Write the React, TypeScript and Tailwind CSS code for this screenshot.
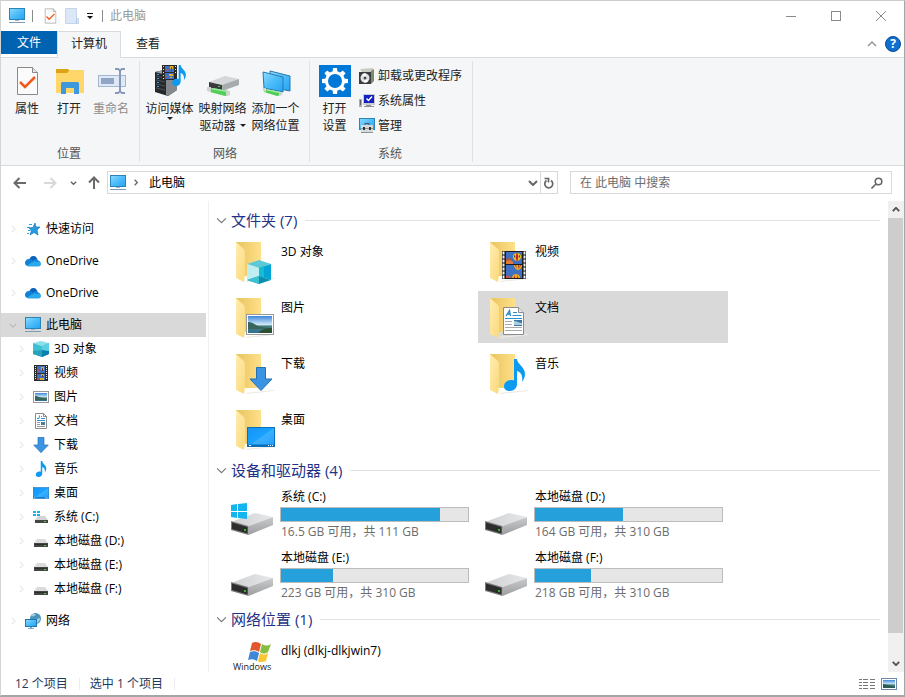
import { useState } from "react"
import type { ComponentType, ReactNode, SVGProps } from "react"
import clsx from "clsx"

type IconProps = SVGProps<SVGSVGElement>
type Icon = ComponentType<IconProps>

/* ---------- shared gradients ---------- */

function Gradients() {
  return (
    <svg className="absolute h-0 w-0" aria-hidden="true">
      <defs>
        <linearGradient id="screen" x1="0" y1="0" x2="1" y2="1">
          <stop offset="0" stopColor="#8fdcff" />
          <stop offset="0.5" stopColor="#4dbcf9" />
          <stop offset="1" stopColor="#22a3f3" />
        </linearGradient>
        <linearGradient id="folderBack" x1="0" y1="0" x2="1" y2="0">
          <stop offset="0" stopColor="#e9c35d" />
          <stop offset="1" stopColor="#ffe08a" />
        </linearGradient>
        <linearGradient id="folderFlap" x1="0" y1="0" x2="1" y2="1">
          <stop offset="0" stopColor="#ffedb0" />
          <stop offset="1" stopColor="#fbd97c" />
        </linearGradient>
        <linearGradient id="driveTop" x1="0" y1="0" x2="1" y2="0">
          <stop offset="0" stopColor="#d0d1d2" />
          <stop offset="1" stopColor="#e6e7e9" />
        </linearGradient>
        <linearGradient id="driveSide" x1="0" y1="0" x2="0" y2="1">
          <stop offset="0" stopColor="#c9cbcd" />
          <stop offset="1" stopColor="#9b9da0" />
        </linearGradient>
        <linearGradient id="sky" x1="0" y1="0" x2="0" y2="1">
          <stop offset="0" stopColor="#3f86dc" />
          <stop offset="0.5" stopColor="#cfe9f8" />
          <stop offset="0.6" stopColor="#4a7f79" />
          <stop offset="1" stopColor="#2e6f96" />
        </linearGradient>
        <linearGradient id="desk" x1="0" y1="0" x2="1" y2="1">
          <stop offset="0" stopColor="#1593f5" />
          <stop offset="0.5" stopColor="#19a2ff" />
          <stop offset="0.52" stopColor="#3bb0ff" />
          <stop offset="1" stopColor="#1e9dff" />
        </linearGradient>
      </defs>
    </svg>
  )
}

/* ---------- item glyphs, used small in the tree and large on folders ---------- */

const PcIcon = (p: IconProps) => (
  <svg viewBox="0 0 16 16" {...p}>
    <rect x="0.5" y="0.5" width="15" height="11" fill="url(#screen)" stroke="#2b84b8" />
    <path d="M6 12h4v1H6z" fill="#9db4c4" />
    <path d="M0 14h16v1H0z" fill="#7d9cb3" />
  </svg>
)

const CubeIcon = (p: IconProps) => (
  <svg viewBox="0 0 24 24" {...p}>
    <path d="M12 0 24 4 12 8 0 4z" fill="#5cc8d8" />
    <path d="M0 4 12 8v8L0 20z" fill="#bfeef2" />
    <path d="M24 4 12 8v8l12 4z" fill="#03a5d6" />
    <path d="M12 8v8l5 2V6z" fill="#17bcd4" />
    <path d="M0 20 12 16 24 20 12 24z" fill="#0b8fae" />
    <path d="M0 20 12 16v8z" fill="#3cc1d1" />
  </svg>
)

const CubeSmallIcon = (p: IconProps) => (
  <svg viewBox="0 0 16 16" {...p}>
    <path d="M0 2 8 0l8 2-7 3z" fill="#8be0ea" />
    <path d="M0 2 9 5v11L0 13z" fill="#3cc0d4" />
    <path d="M0 10l9-1v7l-9-3z" fill="#25a3bb" />
    <path d="M16 2 9 5v11l7-3z" fill="#0f9fd6" />
    <path d="M9 9l7 1v3l-7 3z" fill="#0a7fae" />
    <path d="M9 5 16 2v8L9 9z" fill="#5bd0e2" />
  </svg>
)

const FilmIcon = (p: IconProps) => (
  <svg viewBox="0 0 24 28" {...p}>
    <path d="M0 0h24v28H0z" fill="#4a4a4a" />
    <path d="M3 0h18v28H3z" fill="#1c1c1c" />
    <path d="M4 1h16v12H4zM4 14h16v13H4z" fill="#3f70c4" />
    <path d="M4 8c2-2 4-1 6 1l1 4H4z" fill="#b5503f" />
    <path d="M4 10l4-1 3 2v2H4z" fill="#e07c35" />
    <path d="M4 25c2-1 4-1 5 2H4z" fill="#c2574a" />
    <path d="M15 2c3 0 4 2 4 4s-2 3-3 4h-2c-1-1-3-2-3-4s1-4 4-4z" fill="#f2c522" />
    <path d="M14.500 2h1l1 4-1 4h-1l-1-4z" fill="#c22d2d" />
    <path d="M12 5l1-1v3zM18 5l-1-1v3z" fill="#222" />
    <path d="M12 14h8c0 3-2 4-3 5h-2c-1-1-3-2-3-5z" fill="#e3b023" />
    <path d="M13 14h1l1 4zM16 14h1l-.5 5zM19 14h-1l-1 4z" fill="#a2262c" />
    <path d="M10 27c0-3 2-4 4-4s4 1 4 4z" fill="#f0a51f" />
    <path d="M12 27l1-3v3zM15 24l1 3h-1z" fill="#8b2020" />
    <path
      d="M1 1h1v2H1zM1 5h1v2H1zM1 9h1v2H1zM1 13h1v2H1zM1 17h1v2H1zM1 21h1v2H1zM1 25h1v2H1zM22 1h1v2h-1zM22 5h1v2h-1zM22 9h1v2h-1zM22 13h1v2h-1zM22 17h1v2h-1zM22 21h1v2h-1zM22 25h1v2h-1z"
      fill="#fff"
      stroke="#e8e8e8"
      strokeWidth="0.7"
    />
  </svg>
)

const FilmSmallIcon = (p: IconProps) => (
  <svg viewBox="0 0 16 16" {...p}>
    <path d="M1 0h14v16H1z" fill="#2c2c2c" />
    <path d="M4 1h8v7H4zM4 9h8v6H4z" fill="#3f70c4" />
    <path d="M4 4h3v3H4zM4 13h2v2H4z" fill="#8a5a78" />
    <path d="M8 2h3v3H8zM8 9h3v2H8zM7 13h4v2H7z" fill="#d9b02c" />
    <path d="M9 3h1v3H9zM9 10h1v2H9z" fill="#5e3a1c" />
    <path d="M2 1h1v1H2zM2 3h1v1H2zM2 5h1v1H2zM2 7h1v1H2zM2 9h1v1H2zM2 11h1v1H2zM2 13h1v1H2zM13 1h1v1h-1zM13 3h1v1h-1zM13 5h1v1h-1zM13 7h1v1h-1zM13 9h1v1h-1zM13 11h1v1h-1zM13 13h1v1h-1z" fill="#e4e4e4" />
  </svg>
)

const PictureIcon = (p: IconProps) => (
  <svg viewBox="0 0 28 21" {...p}>
    <rect x="0.5" y="0.5" width="27" height="20" fill="#fff" stroke="#9a9a9a" />
    <rect x="2" y="2" width="24" height="17" fill="url(#sky)" />
    <path d="M2 8c3 0 5 1 8 3s9 3 16 3v1H2z" fill="#39655a" />
    <path d="M12 19c4-4 9-5 14-5v5z" fill="#2c4f35" />
  </svg>
)

const PictureSmallIcon = (p: IconProps) => (
  <svg viewBox="0 0 16 16" {...p}>
    <rect x="0.5" y="2.500" width="15" height="11" fill="#fff" stroke="#999" />
    <rect x="2" y="4" width="12" height="8" fill="url(#sky)" />
    <path d="M2 7c3 0 5 2 12 3v1H2z" fill="#39655a" />
  </svg>
)

const DocIcon = (p: IconProps) => (
  <svg viewBox="0 0 21 28" {...p}>
    <path d="M.5.500h15l5 5v22H.5z" fill="#fff" stroke="#8c8c8c" />
    <path d="M15.500.500v5h5" fill="#e8e8e8" stroke="#8c8c8c" />
    <path d="M3 9 6.500 3.500 7.500 9M4.500 7h3" fill="none" stroke="#2a86c8" strokeWidth="1.300" />
    <path d="M10 5.500h4M9.500 8.500h9M2 11.500h17" stroke="#2a8fd0" />
    <path d="M2 14.500h7M2 17.500h7M2 20.500h17M2 23.500h17" stroke="#a9a9a9" />
    <path d="M11 13h8v6h-8z" fill="#3a76ad" />
    <path d="M11 14c3 0 5 2 8 2v2h-8z" fill="#a9cfd8" />
  </svg>
)

const DocSmallIcon = (p: IconProps) => (
  <svg viewBox="0 0 16 16" {...p}>
    <path d="M2.500.500h8l3 3v12h-11z" fill="#fff" stroke="#8c8c8c" />
    <path d="M10.500.500v3h3" fill="none" stroke="#8c8c8c" />
    <path d="M4 5.500h2l.5-3M8 3.500h1M8 5.500h4M4 7.500h8" fill="none" stroke="#2a8fd0" />
    <path d="M4 9.500h3M4 11.500h3M4 13.500h8" stroke="#999" />
    <path d="M8 9h4v3H8z" fill="#47809f" />
  </svg>
)

const ArrowDownIcon = (p: IconProps) => (
  <svg viewBox="0 0 24 24" {...p}>
    <path d="M7.500.500h9v11.500h6.500L12 23.500 1 12h6.500z" fill="#3b93e3" stroke="#2470b4" />
  </svg>
)

const NoteIcon = (p: IconProps) => (
  <svg viewBox="0 0 21 32" {...p}>
    <path
      d="M10 0h3c0 5 8 8 8 15 0 3-1 5-3 8 1-6-1-10-5-11v13c0 4-3 7-7 7s-6-2-6-4.500C0 24 3 21 7 21c1 0 2 0 3 .5z"
      fill="#0d9bf2"
    />
  </svg>
)

const DesktopIcon = (p: IconProps) => (
  <svg viewBox="0 0 28 20" {...p}>
    <rect x="0.5" y="0.5" width="27" height="19" fill="url(#desk)" stroke="#0d6fb8" />
    <path d="M1 17.500h26v1.500H1z" fill="#0b6cb5" />
    <path d="M2 18h2v1H2zM21 18h1v1h-1zM23 18h1v1h-1zM25 18h1v1h-1z" fill="#fff" />
  </svg>
)

const StarIcon = (p: IconProps) => (
  <svg viewBox="0 0 16 16" {...p}>
    <path d="M10 2 11 6h4l-3 3 1 5-4-2.500L5 14l1.500-4.500L4 7l4-.5z" fill="#279be2" stroke="#1679be" strokeWidth="0.7" />
    <path d="M4 3.500h3M2 6.500h3M3 9.500h2.500M2 12.500h2" stroke="#2f9fe0" />
  </svg>
)

const CloudIcon = (p: IconProps) => (
  <svg viewBox="0 0 16 16" {...p}>
    <path d="M4 8c0-3 2-5 4.500-5C11 3 12 5 12.500 7L8 11z" fill="#0a63b8" />
    <path d="M0 10c0-2 1.500-4 4-4 2 0 3 .5 4 2l-3 5H3c-2 0-3-1.500-3-3z" fill="#1180d8" />
    <path d="M8 8c1-1.500 2.500-2 4-1.500l3.500 2.500-4 2z" fill="#1583dc" />
    <path d="M2 12.500 9 8c2 1 4 1 5.500.5 1 .5 1.500 1.500 1.500 2.500 0 1.500-1 2.500-2.500 2.500H4c-1 0-1.500-.5-2-1z" fill="#2aa8ea" />
  </svg>
)

const DriveSmallIcon = (p: IconProps) => (
  <svg viewBox="0 0 16 16" {...p}>
    <path d="M4 6h8l3 4H1z" fill="#dadbdc" />
    <path d="M1 10h14v4H1z" fill="#454545" />
    <path d="M2 11h12v1H2z" fill="#2d2d2d" />
    <path d="M11 12h2v1h-2z" fill="#3fe03f" />
  </svg>
)

const SystemDriveSmallIcon = (p: IconProps) => (
  <svg viewBox="0 0 16 16" {...p}>
    <path d="M5 7h7l3 4H2z" fill="#d3d4d5" />
    <path d="M2 11h13v3H2z" fill="#454545" />
    <path d="M11 12h2v1h-2z" fill="#3fe03f" />
    <path d="M0 2h3v2H0zM4 2h3v2H4zM0 5h3v2H0zM4 5h3v2H4z" fill="#12b5ee" />
  </svg>
)

const NetworkIcon = (p: IconProps) => (
  <svg viewBox="0 0 16 16" {...p}>
    <circle cx="10.500" cy="5.500" r="5.500" fill="#4b93bd" />
    <path d="M6 3c1-2 3-2.500 4-2s0 2-1 2-2 1-3 0zM12 6l3-1c0 2-1 4-3 5z" fill="#a3cfe2" />
    <rect x="0.5" y="6.500" width="11" height="7" fill="url(#screen)" stroke="#1d76ad" />
    <path d="M5 14h2v1H5zM3 15h6v1H3z" fill="#7cabc8" />
  </svg>
)

/* ---------- 48px tile icons ---------- */

function FolderIcon({ children }: { children: ReactNode }) {
  return (
    <svg viewBox="0 0 48 48" className="size-12 shrink-0" aria-hidden="true">
      <path d="M15 44 44 41v1l-27 3z" fill="#eeebe5" />
      <path d="M6 5h25v34H12z" fill="url(#folderBack)" />
      <path d="M6 5l8 7c1 1 1 2 1 3v23l-1 7-8-4z" fill="url(#folderFlap)" />
      {children}
    </svg>
  )
}

function DriveIcon({ system = false }: { system?: boolean }) {
  return (
    <svg viewBox="0 0 48 48" className="size-12 shrink-0" aria-hidden="true">
      <path d="M1 31 25 22l18 4-24.500 9z" fill="url(#driveTop)" />
      <path d="M18.500 35 43 26v8L18.500 44z" fill="url(#driveSide)" />
      <path d="M1 30l17.500 5v9L1 39z" fill="#7b7c7e" />
      <path d="M2 31.500 17.500 36v6.500L2 38z" fill="#2d2d2d" />
      <path d="M14 38l2 .5v1.500l-2-.5z" fill="#35e035" />
      {system && <path d="M1 14l6-1v7H1zM8 13l9-1v8H8zM1 21h6v6l-6-1zM8 21h9v7l-9-1z" fill="#12b5ee" />}
    </svg>
  )
}

function MediaPlayerIcon() {
  return (
    <svg viewBox="0 0 48 48" className="size-12 shrink-0" aria-hidden="true">
      <path d="M22 7c4-2 6-1 9 1l-2 8c-3-2-6-2-9-1z" fill="#e1582a" />
      <path d="M32 8c3 2 6 2 9 0l-3 8c-3 2-5 2-8 0z" fill="#86bf3f" />
      <path d="M20 16c3-1 6-1 9 1l-2 8c-3-2-6-2-9-1z" fill="#3f86d6" />
      <path d="M30 17c3 2 5 2 8 0l-2 8c-3 1-6 2-8 0z" fill="#f8c733" />
      <text x="3" y="34" fontSize="9" fill="#222">Windows</text>
      <text x="3" y="42" fontSize="8" fill="#222">Media Player</text>
    </svg>
  )
}

/* ---------- ribbon icons ---------- */

const PropertiesIcon = (p: IconProps) => (
  <svg viewBox="0 0 32 32" {...p}>
    <path d="M6.500 2.500h15l5 5v22h-20z" fill="#fbfbfb" stroke="#8a8a8a" />
    <path d="M21.500 2.500v5h5" fill="#e3e3e3" stroke="#8a8a8a" />
    <path d="M9 17l5 5 10-10" fill="none" stroke="#f4591b" strokeWidth="2.500" />
  </svg>
)

const OpenIcon = (p: IconProps) => (
  <svg viewBox="0 0 32 32" {...p}>
    <path d="M3 5c0-1 0-1 1-1h11l2 2v6H3z" fill="#dda315" />
    <path d="M3 8h11l3-3h13c1 0 1 0 1 1v21c0 1 0 1-1 1H4c-1 0-1 0-1-1z" fill="#ffd669" />
    <path d="M8 18l1-1h16l1 1v11h-5v-6h-8v6H8z" fill="#3f97de" />
  </svg>
)

const RenameIcon = (p: IconProps) => (
  <svg viewBox="0 0 32 32" {...p}>
    <rect x="3.500" y="10.500" width="27" height="11" fill="#dfe8f5" stroke="#a4b6d3" />
    <path d="M6 13h13v6H6z" fill="#93a5c6" />
    <path d="M20 4h3l2 1.500L27 4h3M25 5v22M20 28h3l2-1.500 2 1.500h3" fill="none" stroke="#8799ba" strokeWidth="2" />
  </svg>
)

const MediaIcon = (p: IconProps) => (
  <svg viewBox="0 0 32 32" {...p}>
    <path d="M1 7l9-2 13 3v17l-9 6L1 27z" fill="#26282b" />
    <path d="M12 10h11v15l-9 6-2-1z" fill="#85898e" />
    <path d="M1 7l9-2 4 1-2 4z" fill="#9a9ea3" />
    <path d="M2 11l9 2M2 15l9 2M2 19l9 2M2 23l9 2" stroke="#4c5157" />
    <path d="M3 9h2v1H3zM3 13h2v1H3zM3 17h2v1H3zM3 21h2v1H3z" fill="#39a9f0" />
    <path d="M8 0h15v15H8z" fill="#2a2a2a" />
    <path d="M11 1h9v6h-9zM11 8h9v6h-9z" fill="#3f70c4" />
    <path d="M12 4h3v2h-3zM12 11h2v2h-2z" fill="#7d5d86" />
    <path d="M16 1h3v3h-3zM15 9h4v2h-4zM16 12h2v1h-2z" fill="#dfb42c" />
    <path d="M17 2h1v4h-1z" fill="#9a3a20" />
    <path d="M9 1h1v1H9zM9 4h1v1H9zM9 7h1v1H9zM9 10h1v1H9zM9 13h1v1H9zM21 1h1v1h-1zM21 4h1v1h-1zM21 7h1v1h-1z" fill="#e4e4e4" />
    <NoteIcon x="18" y="0" width="14" height="21" />
  </svg>
)

const MapDriveIcon = (p: IconProps) => (
  <svg viewBox="0 0 32 32" {...p}>
    <path d="M2 17 18 11l14 3-16 6z" fill="#d5d7d9" />
    <path d="M15 20 32 14v6l-17 6z" fill="#a8abae" />
    <path d="M2 17l13 3v6L2 23z" fill="#393b3d" />
    <path d="M11 21h2v1h-2z" fill="#35e035" />
    <path d="M3 24l3-1 16 3v4l-4 1L3 27z" fill="#52cf57" />
    <path d="M3 24l3-1 16 3-3 1z" fill="#9be99d" />
    <path d="M0 22h4v5l-4-1zM19 26h4v4l-4 1z" fill="#cfd3d4" />
  </svg>
)

const AddPlaceIcon = (p: IconProps) => (
  <svg viewBox="0 0 32 32" {...p}>
    <path d="M10 6l20 5v15l-20-4z" fill="url(#screen)" stroke="#2478ad" />
    <path d="M3 7l20 5v15L4 23z" fill="url(#screen)" stroke="#2478ad" />
    <path d="M5 24l16 3v3l-4 1-13-4z" fill="#4dcb52" />
    <path d="M5 24l16 3-3 1-13-3z" fill="#a2eca4" />
    <path d="M3 23h3v4l-3-1zM19 27h3v3l-3 1z" fill="#cfd3d4" />
  </svg>
)

const gearTeeth = [0, 45, 90, 135, 180, 225, 270, 315]

const SettingsIcon = (p: IconProps) => (
  <svg viewBox="0 0 32 32" {...p}>
    <path d="M0 0h32v32H0z" fill="#0078d7" />
    <circle cx="16" cy="16" r="8.500" fill="none" stroke="#fff" strokeWidth="3" />
    {gearTeeth.map((angle) => (
      <path key={angle} d="M13.500 8l.5-5h4l.5 5z" fill="#fff" transform={`rotate(${angle} 16 16)`} />
    ))}
  </svg>
)

const UninstallIcon = (p: IconProps) => (
  <svg viewBox="0 0 16 16" {...p}>
    <path d="M1 1l13-1v14l-3 2z" fill="#c9ccc4" />
    <path d="M12 3l3-2v12l-3 3z" fill="#7d8b6b" />
    <path d="M0 4h12v12H0z" fill="#3a3c3e" />
    <circle cx="6" cy="10" r="4.500" fill="#dfe3e5" />
    <path d="M6 10 3 6.500A4.500 4.500 0 0 1 7 5.500zM6 10l3 3.500a4.500 4.500 0 0 1-4 1z" fill="#fff" />
    <circle cx="6" cy="10" r="1.500" fill="#45484a" />
  </svg>
)

const SystemPropsIcon = (p: IconProps) => (
  <svg viewBox="0 0 16 16" {...p}>
    <path d="M0 6h3v8H0z" fill="#a9adb0" />
    <path d="M1 7h1v5H1z" fill="#5f6366" />
    <path d="M4 1h12v11H4z" fill="#c9ccd0" />
    <path d="M5 2h10v8H5z" fill="#1420c0" />
    <path d="M7.500 5.500l2 2 3.500-4" fill="none" stroke="#fff" strokeWidth="1.500" />
    <path d="M7 12h5v1H7zM5 13h10v1H5z" fill="#8d9194" />
  </svg>
)

const ManageIcon = (p: IconProps) => (
  <svg viewBox="0 0 16 16" {...p}>
    <rect x="0.500" y="0.500" width="15" height="11" fill="url(#screen)" stroke="#2b84b8" />
    <path d="M6 7V5.500h4V7" fill="none" stroke="#555" />
    <path d="M2 7h12v8H2z" fill="#d7d9da" />
    <path d="M2 10h12v1H2zM2 14h12v1H2z" fill="#8f9294" />
    <path d="M4 9h2v3H4zM10 9h2v3h-2z" fill="#303234" />
  </svg>
)

/* ---------- small line glyphs ---------- */

function Chevron({ className, d = "M1 1l4 4-4 4", box = "0 0 6 10", width = "1.5" }: { className: string; d?: string; box?: string; width?: string }) {
  return (
    <svg viewBox={box} className={className} fill="none" stroke="currentColor" strokeWidth={width} aria-hidden="true">
      <path d={d} />
    </svg>
  )
}

const DOWN = "M1 1l4 4 4-4"
const UP = "M1 5l4-4 4 4"

/* ---------- title bar ---------- */

function TitleBar() {
  return (
    <header className="flex h-[30px] items-center pl-2">
      <PcIcon className="size-4" />
      <span className="ml-[7px] h-3 w-px bg-[#8a8a8a]" />
      <button aria-label="属性" className="ml-2.5">
        <PropertiesIcon viewBox="5 1 23 30" className="h-4 w-[15px]" />
      </button>
      <button aria-label="新建文件夹" className="ml-[7px]">
        <svg viewBox="0 0 14 16" className="h-4 w-3.5">
          <path d="M.5.500h11v10h2v5H.5z" fill="#dbe6f6" stroke="#c7d5ea" />
          <path d="M11.500 10.500v5" stroke="#b5c7e2" />
        </svg>
      </button>
      <button aria-label="自定义快速访问工具栏" className="ml-[7px]">
        <svg viewBox="0 0 8 7" className="h-[7px] w-2">
          <path d="M1 0h6v1H1zM1 3h6L4 6z" fill="#111" />
        </svg>
      </button>
      <span className="ml-2 h-3 w-px bg-[#8a8a8a]" />
      <h1 className="ml-[7px] text-[#999]">此电脑</h1>
      <div className="ml-auto flex h-full text-[#8a8a8a]">
        <button aria-label="最小化" className="flex w-[46px] items-center justify-center">
          <span className="h-px w-2.5 bg-[#8a8a8a]" />
        </button>
        <button aria-label="最大化" className="flex w-11 items-center justify-center">
          <span className="size-2.5 border border-[#8a8a8a]" />
        </button>
        <button aria-label="关闭" className="flex w-[46px] items-center justify-center">
          <svg viewBox="0 0 10 10" className="size-2.5" stroke="currentColor">
            <path d="M0 0l10 10M10 0 0 10" />
          </svg>
        </button>
      </div>
    </header>
  )
}

/* ---------- ribbon ---------- */

function TabBar() {
  return (
    <nav className="flex h-[26px]">
      <button className="h-[23px] w-14 bg-[#0063b1] text-white">文件</button>
      <button className="relative -mb-px w-16 border border-b-0 border-[#dadbdc] bg-[#f5f6f7] pb-0.5 text-[#222]">计算机</button>
      <button className="w-[54px] pb-px text-[#222]">查看</button>
      <div className="ml-auto flex items-center gap-2 pr-[3px]">
        <button aria-label="最小化功能区">
          <Chevron className="h-1.5 w-2.5 text-[#999]" d={UP} box="0 0 10 6" />
        </button>
        <button aria-label="帮助" className="flex size-4 items-center justify-center rounded-full border border-[#0a4a94] bg-[#0f6fd0] text-[12px] font-bold text-white">
          ?
        </button>
      </div>
    </nav>
  )
}

type RibbonButtonProps = {
  icon: Icon
  lines: string[]
  className: string
  caret?: "below" | "inline"
  disabled?: boolean
}

function RibbonButton({ icon: IconGlyph, lines, className, caret, disabled }: RibbonButtonProps) {
  return (
    <button disabled={disabled} className={clsx("flex flex-col items-center pt-[7px] leading-[17px]", disabled ? "text-[#8d8d8d]" : "text-[#222]", className)}>
      <IconGlyph className="mb-[3px] size-8" />
      {lines.map((line, i) => (
        <span key={line} className="flex items-center gap-1 whitespace-nowrap">
          {line}
          {caret === "inline" && i === lines.length - 1 && <Caret />}
        </span>
      ))}
      {caret === "below" && <Caret />}
    </button>
  )
}

function Caret() {
  return (
    <svg viewBox="0 0 6 3" className="h-[3px] w-1.5">
      <path d="M0 0h6L3 3z" fill="#222" />
    </svg>
  )
}

function RibbonGroup({ label, className, children }: { label: string; className: string; children: ReactNode }) {
  return (
    <section aria-label={label} className={clsx("flex flex-col", className)}>
      <div className="flex flex-1">{children}</div>
      <div className="pr-0.5 pb-0.5 text-center leading-[18px] text-[#555]">{label}</div>
    </section>
  )
}

const Divider = () => <span className="my-[3px] w-px bg-[#e0e1e2]" />

const systemTasks = [
  { label: "卸载或更改程序", icon: UninstallIcon },
  { label: "系统属性", icon: SystemPropsIcon },
  { label: "管理", icon: ManageIcon },
]

function Ribbon() {
  return (
    <div className="flex h-[109px] border-y border-[#dadbdc] bg-[#f5f6f7]">
      <RibbonGroup label="位置" className="w-[138px]">
        <RibbonButton icon={PropertiesIcon} lines={["属性"]} className="ml-[5px] w-[42px]" />
        <RibbonButton icon={OpenIcon} lines={["打开"]} className="w-[42px]" />
        <RibbonButton icon={RenameIcon} lines={["重命名"]} className="w-[42px]" disabled />
      </RibbonGroup>
      <Divider />
      <RibbonGroup label="网络" className="w-[169px] pl-[3px]">
        <RibbonButton icon={MediaIcon} lines={["访问媒体"]} className="w-[53px]" caret="below" />
        <RibbonButton icon={MapDriveIcon} lines={["映射网络", "驱动器"]} className="w-[53px]" caret="inline" />
        <RibbonButton icon={AddPlaceIcon} lines={["添加一个", "网络位置"]} className="w-[53px]" />
      </RibbonGroup>
      <Divider />
      <RibbonGroup label="系统" className="w-[162px]">
        <RibbonButton icon={SettingsIcon} lines={["打开", "设置"]} className="w-[49px]" />
        <div className="flex flex-col pt-[5px]">
          {systemTasks.map(({ label, icon: IconGlyph }) => (
            <button key={label} className="flex h-[25px] items-center gap-[3px] whitespace-nowrap text-[#222]">
              <IconGlyph className="size-4" />
              {label}
            </button>
          ))}
        </div>
      </RibbonGroup>
      <Divider />
    </div>
  )
}

/* ---------- address bar ---------- */

function AddressBar() {
  return (
    <div className="flex h-[35px] items-center pr-3 pb-0.5 text-[#666]">
      <button aria-label="后退" className="ml-3">
        <svg viewBox="0 0 14 12" className="h-3 w-3.5" fill="none" stroke="#6a6a6a" strokeWidth="2">
          <path d="M13 6H2M6.500 1 1.500 6l5 5" />
        </svg>
      </button>
      <button aria-label="前进" className="ml-4" disabled>
        <svg viewBox="0 0 14 12" className="h-3 w-3.5" fill="none" stroke="#d8d8d8" strokeWidth="2">
          <path d="M1 6h11M7.500 1l5 5-5 5" />
        </svg>
      </button>
      <button aria-label="最近浏览的位置" className="ml-[13px]">
        <Chevron className="h-1 w-[7px]" d={DOWN} box="0 0 10 6" width="2" />
      </button>
      <button aria-label="上移" className="ml-[11px]">
        <svg viewBox="0 0 12 14" className="h-3.5 w-3" fill="none" stroke="#6a6a6a" strokeWidth="2">
          <path d="M6 13V2M1 6.500l5-5 5 5" />
        </svg>
      </button>
      <div className="ml-[7px] flex h-[23px] flex-1 items-center border border-[#d9d9d9] pl-0.5">
        <PcIcon className="size-4" />
        <Chevron className="ml-2 h-[7px] w-1" width="2" />
        <button className="ml-[11px] text-black">此电脑</button>
        <button aria-label="历史记录" className="mr-0.5 ml-auto">
          <Chevron className="h-1.5 w-2.5" d={DOWN} box="0 0 10 6" width="2" />
        </button>
        <button aria-label="刷新" className="flex h-full w-[17px] items-center justify-center border-l border-[#d9d9d9]">
          <svg viewBox="0 0 12 12" className="size-3" fill="none" stroke="#666" strokeWidth="1.700">
            <path d="M8 3.500a4 4 0 1 1-4.500 0M1.500 1.500H5.500V5.500" />
          </svg>
        </button>
      </div>
      <label className="ml-3 flex h-[23px] w-[322px] items-center border border-[#d9d9d9] pr-2 pl-[9px]">
        <input type="search" aria-label="搜索" placeholder="在 此电脑 中搜索" className="min-w-0 flex-1 outline-none placeholder:text-[#6d6d6d]" />
        <svg viewBox="0 0 12 12" className="size-3" fill="none" stroke="#666" strokeWidth="1.600">
          <circle cx="7.500" cy="4.500" r="3.300" />
          <path d="M5 7 .500 11.500" />
        </svg>
      </label>
    </div>
  )
}

/* ---------- navigation tree ---------- */

type TreeNode = { id: string; label: string; icon: Icon }

const roots: TreeNode[] = [
  { id: "quick", label: "快速访问", icon: StarIcon },
  { id: "onedrive-1", label: "OneDrive", icon: CloudIcon },
  { id: "onedrive-2", label: "OneDrive", icon: CloudIcon },
]

const pcChildren: TreeNode[] = [
  { id: "3d", label: "3D 对象", icon: CubeSmallIcon },
  { id: "videos", label: "视频", icon: FilmSmallIcon },
  { id: "pictures", label: "图片", icon: PictureSmallIcon },
  { id: "docs", label: "文档", icon: DocSmallIcon },
  { id: "downloads", label: "下载", icon: ArrowDownIcon },
  { id: "music", label: "音乐", icon: NoteIcon },
  { id: "desktop", label: "桌面", icon: DesktopIcon },
  { id: "c", label: "系统 (C:)", icon: SystemDriveSmallIcon },
  { id: "d", label: "本地磁盘 (D:)", icon: DriveSmallIcon },
  { id: "e", label: "本地磁盘 (E:)", icon: DriveSmallIcon },
  { id: "f", label: "本地磁盘 (F:)", icon: DriveSmallIcon },
]

function TreeRow({ node, nested, open }: { node: TreeNode; nested?: boolean; open?: boolean }) {
  const IconGlyph = node.icon
  return (
    <button className={clsx("flex h-6 w-full items-center text-left text-black", nested ? "pl-4" : "pl-2", open && "bg-[#d9d9d9]")}>
      <span className="flex w-2 justify-center">
        {open ? (
          <Chevron className="h-[5px] w-2 shrink-0 text-[#b8b8b8]" d={DOWN} box="0 0 10 6" />
        ) : (
          <Chevron className="h-2 w-[5px] text-[#e8e8e8]" />
        )}
      </span>
      <IconGlyph className="mr-[5px] ml-2 size-4" />
      {node.label}
    </button>
  )
}

function NavTree() {
  return (
    <nav aria-label="导航窗格" className="flex w-52 flex-col gap-2 border-r border-[#f0f0f0] pt-4 pr-0.5">
      {roots.map((node) => (
        <TreeRow key={node.id} node={node} />
      ))}
      <div>
        <TreeRow node={{ id: "pc", label: "此电脑", icon: PcIcon }} open />
        {pcChildren.map((node) => (
          <TreeRow key={node.id} node={node} nested />
        ))}
      </div>
      <TreeRow node={{ id: "network", label: "网络", icon: NetworkIcon }} />
    </nav>
  )
}

/* ---------- file list ---------- */

const folders = [
  { name: "3D 对象", overlay: <CubeIcon x="17" y="23" width="24" height="24" /> },
  { name: "视频", overlay: <FilmIcon x="18" y="14" width="24" height="28" /> },
  { name: "图片", overlay: <PictureIcon x="16" y="21" width="28" height="21" /> },
  { name: "文档", overlay: <DocIcon x="19" y="14" width="21" height="28" /> },
  { name: "下载", overlay: <ArrowDownIcon x="19" y="18" width="24" height="24" /> },
  { name: "音乐", overlay: <NoteIcon x="20" y="10" width="21" height="32" /> },
  { name: "桌面", overlay: <DesktopIcon x="17" y="22" width="28" height="20" /> },
]

const drives = [
  { name: "系统 (C:)", space: "16.5 GB 可用，共 111 GB", used: 85, system: true },
  { name: "本地磁盘 (D:)", space: "164 GB 可用，共 310 GB", used: 47 },
  { name: "本地磁盘 (E:)", space: "223 GB 可用，共 310 GB", used: 28 },
  { name: "本地磁盘 (F:)", space: "218 GB 可用，共 310 GB", used: 30 },
]

function Section({ title, children }: { title: string; children: ReactNode }) {
  return (
    <section>
      <h2 className="flex h-[30px] items-center pl-[7px] text-[15px] text-[#1e3287]">
        <Chevron className="mr-1 h-[7px] w-[11px] text-[#777]" d={DOWN} box="0 0 10 6" width="1" />
        {title}
        <span className="ml-2 h-px flex-1 bg-[#e2e2e2]" />
      </h2>
      {children}
    </section>
  )
}

function FileList() {
  const [selected, setSelected] = useState("文档")

  return (
    <main className="min-w-0 flex-1 overflow-hidden pt-1 pr-2">
      <Section title="文件夹 (7)">
        <div className="grid grid-cols-[250px_250px] gap-1 pl-[15px]">
          {folders.map(({ name, overlay }) => (
            <button
              key={name}
              onClick={() => setSelected(name)}
              className={clsx("flex h-[52px] pt-0.5 pl-1.5 text-left text-black", selected === name && "bg-[#d9d9d9]")}
            >
              <FolderIcon>{overlay}</FolderIcon>
              <span className="ml-[3px] pt-[5px] leading-5">{name}</span>
            </button>
          ))}
        </div>
      </Section>

      <Section title="设备和驱动器 (4)">
        <div className="grid grid-cols-[250px_250px] gap-x-1 gap-y-[3px] pl-[15px]">
          {drives.map(({ name, space, used, system }) => (
            <button key={name} className="flex h-[58px] pt-1 pl-1.5 text-left text-black">
              <span className="pt-0.5">
                <DriveIcon system={system} />
              </span>
              <span className="ml-0.5 flex w-[189px] flex-col">
                <span className="pb-0.5 pl-px leading-4">{name}</span>
                <span className="h-[15px] border border-[#bcbcbc] bg-[#e6e6e6]">
                  <span className="block h-full bg-[#26a0da]" style={{ width: `${used}%` }} />
                </span>
                <span className="pl-px leading-5 text-[#6d6d6d]">{space}</span>
              </span>
            </button>
          ))}
        </div>
      </Section>

      <Section title="网络位置 (1)">
        <div className="pl-[15px]">
          <button className="flex h-[52px] w-[250px] pt-0.5 pl-1.5 text-left text-black">
            <MediaPlayerIcon />
            <span className="ml-[3px] pt-[5px] leading-5">dlkj (dlkj-dlkjwin7)</span>
          </button>
        </div>
      </Section>
    </main>
  )
}

function Scrollbar() {
  return (
    <div className="flex w-4 flex-col bg-[#f0f0f0] text-[#555]">
      <button aria-label="向上滚动" className="flex h-[17px] items-center justify-center">
        <Chevron className="h-[5px] w-2" d={UP} box="0 0 10 6" width="2.500" />
      </button>
      <div className="mr-px flex-1">
        <div className="h-[95%] bg-[#cdcdcd]" />
      </div>
      <button aria-label="向下滚动" className="flex h-[17px] items-center justify-center">
        <Chevron className="h-[5px] w-2" d={DOWN} box="0 0 10 6" width="2.500" />
      </button>
    </div>
  )
}

function StatusBar() {
  return (
    <footer className="flex h-[23px] items-center pr-[7px] pl-3.5 text-[#1e395b]">
      <span>12 个项目</span>
      <span className="mr-2.5 ml-[11px] h-3 w-px bg-[#ececec]" />
      <span>选中 1 个项目</span>
      <span className="ml-[11px] h-3 w-px bg-[#ececec]" />
      <div className="ml-auto flex items-center gap-1.5">
        <button aria-label="详细信息">
          <svg viewBox="0 0 16 12" className="h-3 w-4" stroke="#777">
            <path d="M0 1.500h3M0 4.500h3M0 7.500h3M0 10.500h3M4 1.500h5M4 4.500h5M4 7.500h5M4 10.500h5M11 1.500h5M11 4.500h5M11 7.500h5M11 10.500h5" />
          </svg>
        </button>
        <button aria-label="大缩略图">
          <svg viewBox="0 0 16 12" className="h-3 w-4">
            <rect x="0.500" y="0.500" width="15" height="11" fill="#fff" stroke="#6c8aa8" />
            <path d="M2 2h12v8H2z" fill="url(#sky)" />
            <path d="M2 6l5 1 7 2v1H2z" fill="#2c5a56" />
          </svg>
        </button>
      </div>
    </footer>
  )
}

export default function App() {
  return (
    <div className="flex h-screen flex-col overflow-hidden border border-t-[#ccc] border-r-[#a5a5a5] border-b-2 border-b-[#a5a5a5] border-l-[#d4d4d4] bg-white font-['Open_Sans','Noto_Sans_CJK_SC',sans-serif] text-[12px]">
      <Gradients />
      <TitleBar />
      <TabBar />
      <Ribbon />
      <AddressBar />
      <div className="flex min-h-0 flex-1">
        <NavTree />
        <FileList />
        <Scrollbar />
      </div>
      <StatusBar />
    </div>
  )
}
